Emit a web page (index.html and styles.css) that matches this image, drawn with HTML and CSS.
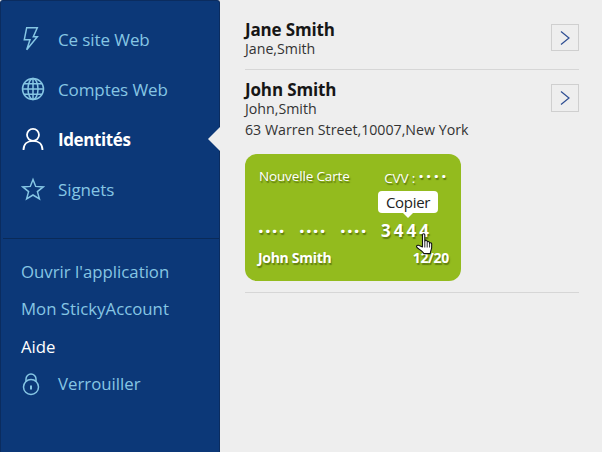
FILE: index.html
```html
<!DOCTYPE html>
<html lang="fr">
<head>
<meta charset="utf-8">
<title>Identités</title>
<link rel="stylesheet" href="styles.css">
</head>
<body>
<div class="app">
  <nav class="sidebar">
    <ul class="nav-main">
      <li class="nav-item">
        <svg class="icon" viewBox="0 0 24 24"><path d="M5.700.7h10.600l-4 9h4L5.700 22.700 9 12.700H3.300z"/></svg>
        <span>Ce site Web</span>
      </li>
      <li class="nav-item">
        <svg class="icon" viewBox="0 0 24 24"><circle cx="12" cy="12" r="10.500"/><ellipse cx="12" cy="12" rx="5" ry="10.500"/><path d="M12 1.500v21M1.500 12h21M3 6.800h18M3 17.200h18"/></svg>
        <span>Comptes Web</span>
      </li>
      <li class="nav-item active">
        <svg class="icon" viewBox="0 0 24 24"><circle cx="12" cy="7.800" r="6"/><path d="M2.500 23c0-6 4-9.200 9.500-9.200s9.500 3.200 9.500 9.200"/></svg>
        <span>Identités</span>
      </li>
      <li class="nav-item">
        <svg class="icon" viewBox="0 0 24 24"><path d="M12 2.500l2.700 6.900 7.500.5-5.800 4.700 2 7.300L12 18l-6.400 3.900 2-7.300-5.800-4.700 7.500-.5z"/></svg>
        <span>Signets</span>
      </li>
    </ul>
    <ul class="nav-links">
      <li class="link">Ouvrir l'application</li>
      <li class="link">Mon StickyAccount</li>
      <li class="link link-on">Aide</li>
      <li class="link lock">
        <svg class="icon icon-lock" viewBox="0 0 18 24"><circle cx="9" cy="15" r="7.500"/><path d="M4 9.500V7a5 5 0 0 1 10 0v2.500"/><path class="keyhole" d="M9 13.500v4"/></svg>
        <span>Verrouiller</span>
      </li>
    </ul>
  </nav>
  <main class="content">
    <section class="person">
      <div class="person-head">
        <div>
          <h2 class="name">Jane Smith</h2>
          <p class="detail">Jane,Smith</p>
        </div>
        <button class="more"><svg viewBox="0 0 12 16"><path d="M2 1.500 10 8l-8 6.500"/></svg></button>
      </div>
    </section>
    <section class="person">
      <div class="person-head">
        <div>
          <h2 class="name">John Smith</h2>
          <p class="detail">John,Smith</p>
          <p class="detail address">63 Warren Street,10007,New York</p>
        </div>
        <button class="more"><svg viewBox="0 0 12 16"><path d="M2 1.500 10 8l-8 6.500"/></svg></button>
      </div>
      <div class="card">
        <div class="card-top"><span class="card-label">Nouvelle Carte</span><span class="cvv">CVV : <span class="cvv-dots">····</span></span></div>
        <div class="card-number">
          <span class="group">····</span><span class="group">····</span><span class="group">····</span><span class="last">3444</span>
          <span class="tooltip">Copier</span>
          <svg class="hand" viewBox="0 0 19 23"><path d="M7.500 1.800c0-1.400 2.300-1.400 2.300 0v6.700l.3-.7c.4-1 2-.8 2.100.4l.1.900c.4-1 2-.8 2.100.4l.1.900c.5-1 2.100-.8 2.200.5.200 3-.1 5-.8 6.800-.3.900-.6 1.900-.6 2.900H8.800c-.8-2-3.500-3.500-6.500-5.800-1.500-1.200-.7-3 1.200-2.500l4 1.600z"/><path class="hand-line" d="M9.800 9v5.500M12.200 9.500v5M14.600 10.500v4"/></svg>
        </div>
        <div class="card-bottom"><span>John Smith</span><span>12/20</span></div>
      </div>
    </section>
  </main>
</div>
</body>
</html>
```
FILE: styles.css
```css
* { box-sizing: border-box; }
html, body { margin: 0; height: 100%; }
body { font-family: "Open Sans", "Noto Sans", "Liberation Sans", sans-serif; background: #eeeeee; color: #1f1f1f; overflow: hidden; }
ul { list-style: none; margin: 0; padding: 0; }
p, h2 { margin: 0; }

.app { display: flex; width: 602px; height: 452px; }

.sidebar { width: 220px; flex: none; background: #0c3878; border: 1px solid #0b2c5f; border-width: 1px 1px 0 1px; border-radius: 3px 3px 0 0; padding-top: 13px; }
.nav-main { height: 225px; border-bottom: 1px solid #0a2a58; margin-left: 2px; }
.nav-item { height: 50px; display: flex; align-items: center; padding-left: 18px; gap: 13px; font-size: 17px; letter-spacing: -.1px; color: #86c6e4; }
.nav-item.active { color: #fff; font-weight: 700; position: relative; letter-spacing: -.4px; }
.nav-item.active::after { content: ""; position: absolute; right: -1px; top: 13px; border: 12px solid transparent; border-left: 0; border-right-color: #eeeeee; border-right-width: 12px; }
.icon { width: 24px; height: 24px; flex: none; fill: none; stroke: currentColor; stroke-width: 1.500; }
.active .icon { stroke-width: 1.800; }
.nav-links { padding: 13.500px 0 0 20px; }
.link { height: 37.500px; display: flex; align-items: center; font-size: 16.800px; color: #86c6e4; }
.link-on { color: #fff; }
.lock { gap: 18px; }
.icon-lock { width: 18px; height: 24px; margin-left: 1px; }
.keyhole { stroke-width: 2; }

.content { flex: 1; padding: 0 23px 0 25px; }
.person { border-bottom: 1px solid #d6d6d6; }
.person-head { display: flex; justify-content: space-between; align-items: flex-start; }
.person:first-child { height: 70px; padding-top: 19px; }
.person:last-child { height: 223px; padding-top: 9px; }
.name { font-size: 17px; line-height: 21px; font-weight: 700; letter-spacing: -.15px; color: #161616; }
.detail { font-size: 14.200px; line-height: 17px; color: #333; }
.address { margin-top: 4px; }
.more { width: 28px; height: 28px; margin-top: 5px; padding: 0; background: none; border: 1px solid #cfcfcf; display: flex; align-items: center; justify-content: center; }
.person:first-child .more { height: 27px; }
.more svg { width: 12px; height: 16px; fill: none; stroke: #2d4d92; stroke-width: 1.200; }

.card { width: 216px; height: 127px; margin-top: 16px; background: #93bb1e; border-radius: 12px; color: #fff; padding: 13px 14px 0 13px; text-shadow: 1px 2px 1px rgba(50, 70, 0, .5); }
.card-top { display: flex; justify-content: space-between; font-size: 13.500px; line-height: 19px; letter-spacing: -.15px; }
.card-label { margin-left: 1px; }
.cvv { padding-top: 2px; margin-right: -2px; }
.cvv-dots { font-size: 18px; font-weight: 700; letter-spacing: 2.500px; line-height: 15px; }
.card-number { position: relative; display: flex; align-items: center; height: 30px; margin-top: 27px; font-size: 20px; font-weight: 700; letter-spacing: 1px; }
.group { width: 41px; letter-spacing: 1.200px; }
.last { font-size: 17px; letter-spacing: 3px; }
.tooltip { position: absolute; left: 120px; top: -24px; width: 60px; height: 22px; background: #fff; color: #222; border-radius: 4px; font-size: 15px; font-weight: 400; letter-spacing: -.3px; line-height: 22px; text-align: center; text-shadow: none; }
.tooltip::after { content: ""; position: absolute; left: 24px; top: 21px; border: 6px solid transparent; border-top: 6px solid #fff; border-bottom: 0; }
.hand { position: absolute; left: 157px; top: 18px; width: 19px; height: 23px; fill: #fff; stroke: #111; stroke-width: 1.100; stroke-linejoin: round; }
.hand-line { fill: none; stroke-width: .9; }
.card-bottom { display: flex; justify-content: space-between; margin: 4px -2px 0 0; font-size: 14px; font-weight: 700; letter-spacing: -.3px; line-height: 18px; }
```
